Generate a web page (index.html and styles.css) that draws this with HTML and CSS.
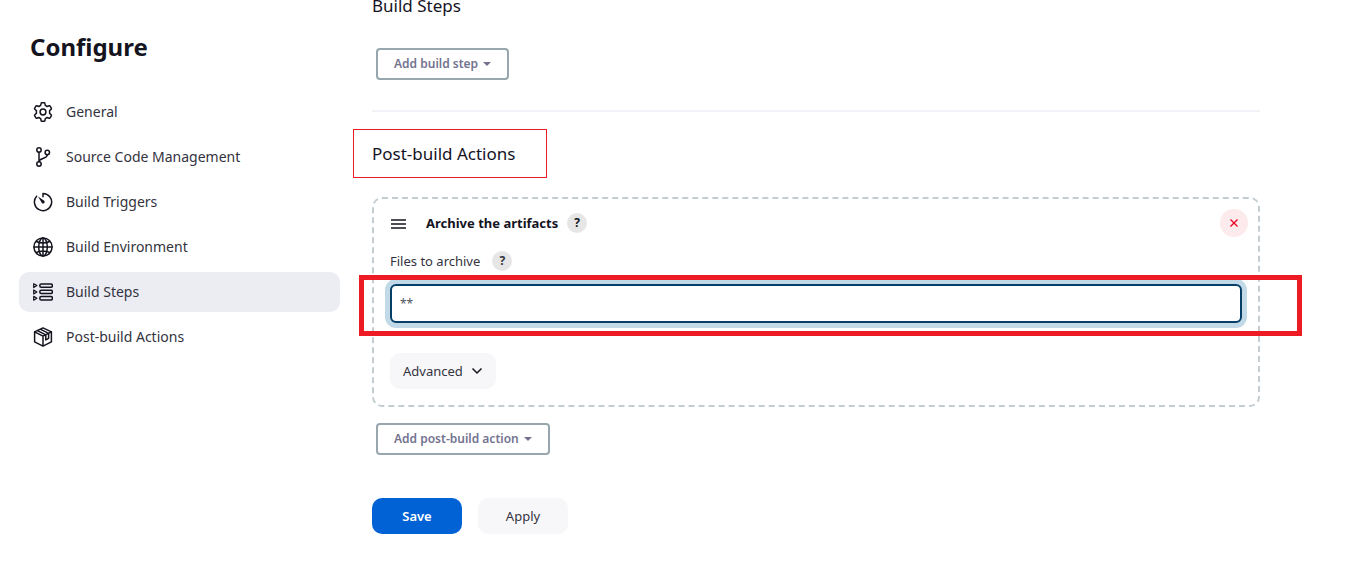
FILE: index.html
```html
<!DOCTYPE html>
<html lang="en">
<head>
<meta charset="utf-8">
<meta name="viewport" content="width=device-width, initial-scale=1">
<title>Configure</title>
<link rel="stylesheet" href="styles.css">
</head>
<body>
<div class="page">
  <aside class="sidebar">
    <h1 class="title">Configure</h1>
    <nav class="nav">
      <a class="nav-item" href="#general">
        <svg class="nav-icon" viewBox="0 0 20 20"><path d="M7.7 3.4 8.1 1.4Q8.2.8 8.8.8h2.4q.6 0 .7.6l.4 2 1.9 1.1 2-.7q.6-.2.9.3l1.300 2.200q.3.5-.2.9L16.600 8.600v2.800l1.600 1.400q.5.4.2.9l-1.300 2.200q-.3.5-.9.3l-2-.7-1.900 1.100-.4 2q-.1.6-.7.6H8.800q-.6 0-.7-.6l-.4-2-1.900-1.100-2 .7q-.6.2-.9-.3l-1.300-2.200q-.3-.5.2-.9l1.600-1.400V8.600L1.800 7.200q-.5-.4-.2-.9l1.300-2.200q.3-.5.9-.3l2 .7z"/><circle cx="10" cy="10" r="2.900"/></svg>
        <span>General</span></a>
      <a class="nav-item" href="#scm">
        <svg class="nav-icon" viewBox="0 0 20 20"><circle cx="6" cy="3" r="2.200"/><circle cx="6" cy="17" r="2.200"/><circle cx="14.300" cy="5.500" r="2.200"/><path d="M6 5.200v9.600M14.300 7.700c0 4.500-8.300 3-8.300 7"/></svg>
        <span>Source Code Management</span></a>
      <a class="nav-item" href="#triggers">
        <svg class="nav-icon" viewBox="0 0 20 20"><path d="M10 4.700V1.400a8.600 8.600 0 1 1-6.400 2.900"/><path class="solid" d="M5 4.600l6.200 4.100a1.600 1.600 0 0 1-2.300 2.300z"/></svg>
        <span>Build Triggers</span></a>
      <a class="nav-item" href="#environment">
        <svg class="nav-icon" viewBox="0 0 20 20"><circle cx="10" cy="10" r="9.100"/><ellipse cx="10" cy="10" rx="4.300" ry="9.100"/><path d="M10 1v18M1 10h18M3.500 4.500c3.500 2 9.500 2 13 0M3.500 15.500c3.500-2 9.500-2 13 0"/></svg>
        <span>Build Environment</span></a>
      <a class="nav-item selected" href="#steps" aria-current="true">
        <svg class="nav-icon" viewBox="0 0 20 20"><rect x="6.800" y="1.900" width="12.600" height="3.400" rx="1.500"/><rect x="6.800" y="8.200" width="12.600" height="3.400" rx="1.500"/><rect x="6.800" y="14.500" width="12.600" height="3.400" rx="1.500"/><path stroke-width="1.200" d="M.7 1.700v3.900l3.200-2zM.7 8v3.900l3.200-2zM.7 14.300v3.900l3.200-2z"/></svg>
        <span>Build Steps</span></a>
      <a class="nav-item" href="#post-build">
        <svg class="nav-icon" viewBox="0 0 20 20"><path d="M10 .9l8.400 4v10L10 19.200 1.600 14.900v-10zM1.600 4.900L10 9.200l8.400-4.300M10 9.200v10M4.400 3.600l8.400 4.300M7.200 2.200l8.400 4.200M12.800 7.900v5l2.800-1.600V6.400"/></svg>
        <span>Post-build Actions</span></a>
    </nav>
  </aside>

  <main class="main">
    <section class="steps" id="steps">
      <h2 class="heading">Build Steps</h2>
      <button class="add" type="button">Add build step<span class="caret"></span></button>
    </section>
    <section class="post" id="post-build">
      <h2 class="heading marked">Post-build Actions</h2>
      <div class="card">
        <div class="card-head">
          <svg class="grip" viewBox="0 0 16 16"><path d="M1 5h15M1 9h15M1 13h15"/></svg>
          <strong class="card-title">Archive the artifacts</strong>
          <button class="help" type="button" aria-label="Help for Archive the artifacts">?</button>
          <button class="remove" type="button" aria-label="Remove"><svg viewBox="0 0 10 10"><path d="M1.500 1.500l7 7M8.500 1.500l-7 7"/></svg></button>
        </div>
        <div class="label-row">
          <label for="files">Files to archive</label>
          <button class="help" type="button" aria-label="Help for Files to archive">?</button>
        </div>
        <div class="field">
          <input class="input" id="files" type="text" value="**">
        </div>
        <button class="button advanced" type="button">Advanced<svg viewBox="0 0 12 12"><path d="M1.500 3.500L6 8l4.500-4.500"/></svg></button>
      </div>
      <button class="add" type="button">Add post-build action<span class="caret"></span></button>
    </section>
    <div class="actions">
      <button class="button primary" type="submit">Save</button>
      <button class="button" type="button">Apply</button>
    </div>
  </main>
</div>
</body>
</html>
```
FILE: styles.css
```css
* { box-sizing: border-box; }
body {
  margin: 0;
  background: #fff;
  color: #14141f;
  font-family: "Noto Sans", "Open Sans", sans-serif;
  font-size: 13px;
  line-height: 20px;
}
button, input { font: inherit; color: inherit; }
button { cursor: pointer; }
svg { fill: none; stroke: currentColor; flex: none; }

.page { display: flex; gap: 32px; overflow: hidden; }

.sidebar { flex: 0 0 340px; padding: 31px 0 0 19px; }
.title { margin: 0 0 29px 11px; font-size: 24px; line-height: 32px; font-weight: 700; }
.nav { display: flex; flex-direction: column; gap: 5px; }
.nav-item {
  display: flex;
  align-items: center;
  gap: 13px;
  height: 40px;
  padding: 0 14px;
  border-radius: 10px;
  color: #333340;
  font-size: 14px;
  text-decoration: none;
}
.nav-item.selected { background: #ecedf3; }
.nav-icon { width: 20px; height: 20px; stroke-width: 1.500; stroke-linejoin: round; stroke-linecap: round; color: #14141f; }
.solid { fill: currentColor; stroke: none; }

.main { flex: 1; min-width: 0; padding-right: 86px; margin-top: -6px; }
.heading { margin: 0; font-size: 17px; line-height: 24px; font-weight: 400; }
.steps { padding-bottom: 30px; border-bottom: 2px solid #f2f2f8; }
.add {
  display: flex;
  align-items: center;
  gap: 5px;
  height: 32px;
  margin: 16px 4px 0;
  padding: 0 16px;
  border: 2px solid #98a6ad;
  border-radius: 4px;
  background: #fff;
  color: #737390;
  font-size: 12px;
  font-weight: 600;
}
.steps .add { margin-top: 30px; }
.caret { border: 4px solid transparent; border-top-color: currentColor; border-bottom: 0; }

.marked { position: relative; width: fit-content; margin: 30px 0 31px; }
.marked::after {
  content: "";
  position: absolute;
  inset: -13px -32px -12px -19px;
  border: 1px solid #ed1c24;
}

.card { padding: 10px 16px 16px; border: 2px dashed #c3ccd1; border-radius: 10px; }
.card-head { display: flex; align-items: center; height: 28px; }
.grip { width: 16px; height: 16px; margin-right: 20px; stroke-width: 1.500; }
.card-title { margin-right: 9px; }
.help {
  width: 20px;
  height: 20px;
  padding: 0;
  border: 0;
  border-radius: 50%;
  background: #e6e6e6;
  font-size: 12px;
  line-height: 20px;
  font-weight: 700;
}
.remove {
  display: grid;
  place-items: center;
  width: 28px;
  height: 28px;
  margin: 0 -6px 0 auto;
  padding: 0;
  border: 0;
  border-radius: 50%;
  background: #fceaec;
  color: #e6001f;
}
.remove svg { width: 10px; height: 10px; stroke-width: 1.300; }
.label-row { display: flex; align-items: center; gap: 12px; margin: 14px 0 13px; color: #333340; }
.field { position: relative; }
.field::after {
  content: "";
  position: absolute;
  inset: -9px -60px -13px -31px;
  border: 5px solid #ed1c24;
  pointer-events: none;
}
.input {
  display: block;
  width: 100%;
  height: 39px;
  padding: 0 8px;
  border: 2px solid #053f68;
  border-radius: 6px;
  outline: 0;
  background: #fff;
  box-shadow: 0 0 0 5px #c2d9e7;
  color: #4d545d;
  font-size: 12px;
}
.button {
  min-width: 90px;
  height: 36px;
  padding: 0 13px;
  border: 0;
  border-radius: 10px;
  background: #f7f7f9;
  color: #333340;
}
.advanced { display: flex; align-items: center; gap: 8px; margin-top: 30px; }
.advanced svg { width: 12px; height: 12px; stroke-width: 1.500; color: #14141f; }
.actions { display: flex; gap: 16px; margin: 43px 0 37px; }
.primary { background: #0062d4; color: #fff; font-weight: 600; }
```
